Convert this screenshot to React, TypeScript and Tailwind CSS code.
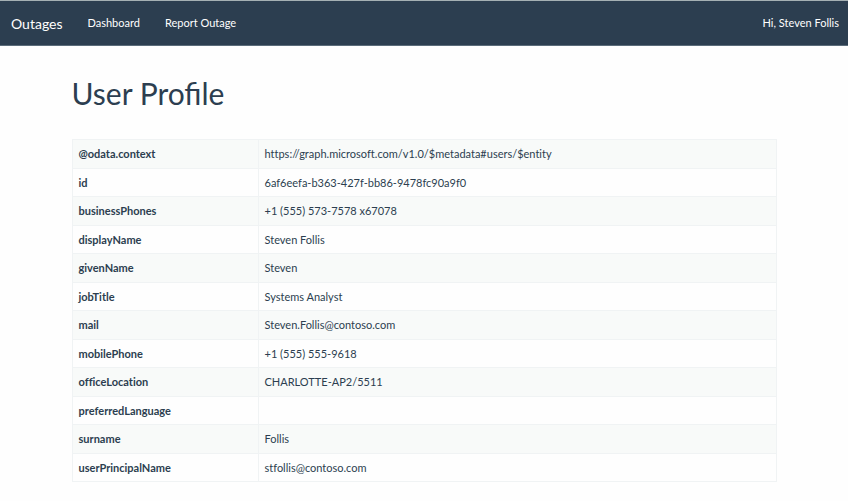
const profile: [string, string][] = [
  ['@odata.context', 'https://graph.microsoft.com/v1.0/$metadata#users/$entity'],
  ['id', '6af6eefa-b363-427f-bb86-9478fc90a9f0'],
  ['businessPhones', '+1 (555) 573-7578 x67078'],
  ['displayName', 'Steven Follis'],
  ['givenName', 'Steven'],
  ['jobTitle', 'Systems Analyst'],
  ['mail', 'Steven.Follis@contoso.com'],
  ['mobilePhone', '+1 (555) 555-9618'],
  ['officeLocation', 'CHARLOTTE-AP2/5511'],
  ['preferredLanguage', ''],
  ['surname', 'Follis'],
  ['userPrincipalName', 'stfollis@contoso.com'],
];

function NavBar() {
  return (
    <nav className="flex h-[46px] items-center gap-[25px] border-y border-t-[#a5b0b3] border-b-[#5b6c7a] bg-[#2c3e50] pl-[11px] pr-[9px] text-[11px] text-white">
      <a href="#" className="text-[14px]">Outages</a>
      <a href="#">Dashboard</a>
      <a href="#">Report Outage</a>
      <a href="#" className="ml-auto">Hi, Steven Follis</a>
    </nav>
  );
}

export default function App() {
  return (
    <div className="min-h-screen bg-[#fefefe] font-[Lato,sans-serif] text-[#2c3e50]">
      <NavBar />
      <main className="mx-auto w-10/12 max-w-[705px] pt-[27px]">
        <h1 className="text-[30px] leading-10">User Profile</h1>
        <table className="mt-[26px] w-full border-collapse border border-[#f0f3f4] text-[11px] leading-5 [font-variant-ligatures:none]">
          <tbody>
            {profile.map(([name, value]) => (
              <tr key={name} className="odd:h-[29px] odd:bg-[#f8faf9] even:h-[28px]">
                <th scope="row" className="w-[186px] border border-[#f0f3f4] px-1.5 text-left font-bold">{name}</th>
                <td className="border border-[#f0f3f4] px-1.5">{value}</td>
              </tr>
            ))}
          </tbody>
        </table>
      </main>
    </div>
  );
}
